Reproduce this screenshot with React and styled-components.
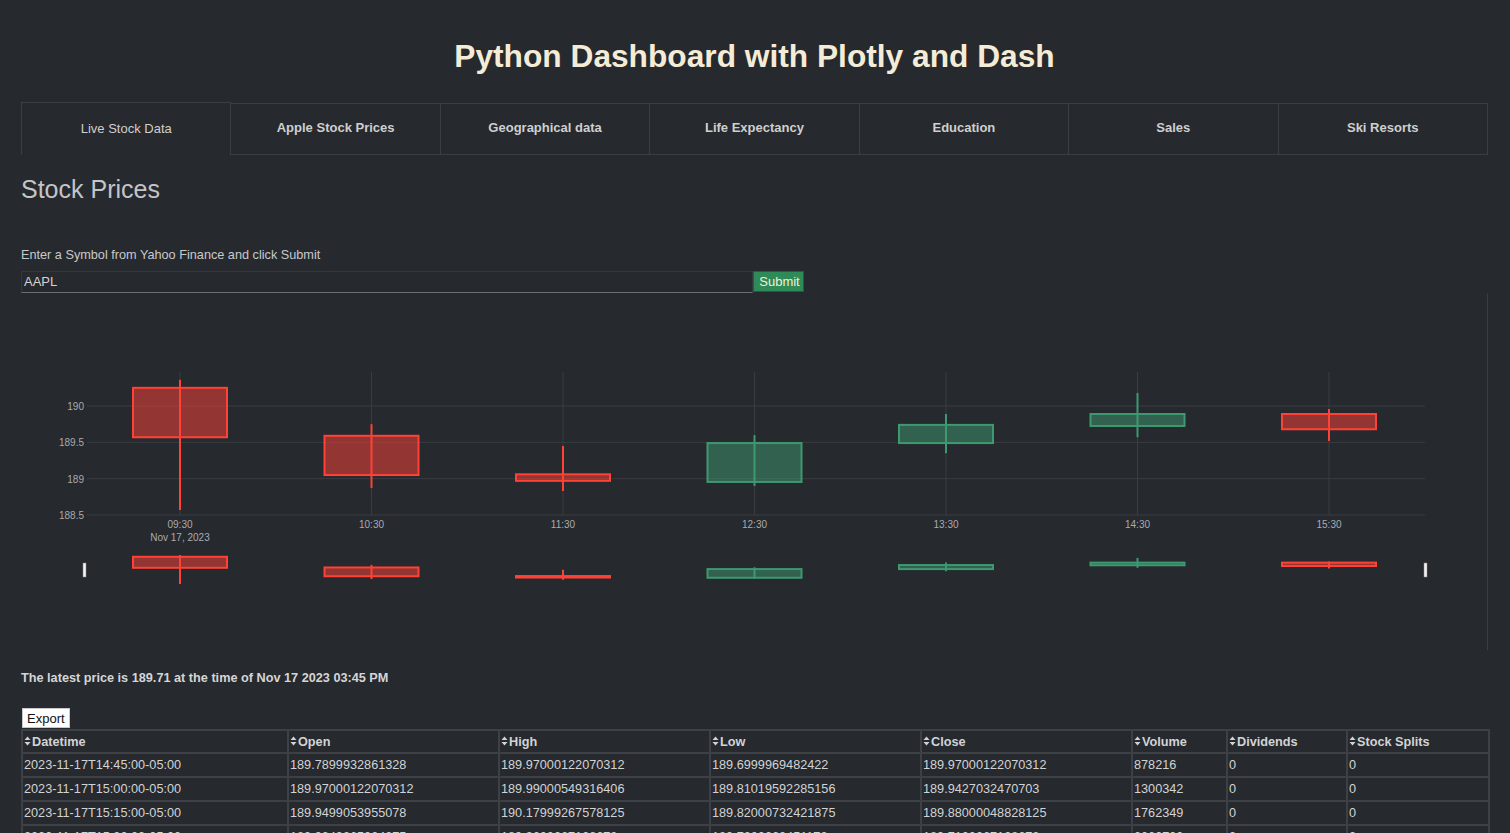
import React from "react";
import styled, { createGlobalStyle } from "styled-components";

const GlobalStyle = createGlobalStyle`
  body {
    margin: 0;
    background: #26292e;
    font-family: "Liberation Sans", Arial, sans-serif;
  }
`;

const tabs = [
  "Live Stock Data",
  "Apple Stock Prices",
  "Geographical data",
  "Life Expectancy",
  "Education",
  "Sales",
  "Ski Resorts",
];

// open, high, low, close
const candles = [
  { t: "09:30", o: 190.25, h: 190.36, l: 188.57, c: 189.57 },
  { t: "10:30", o: 189.59, h: 189.75, l: 188.87, c: 189.05 },
  { t: "11:30", o: 189.06, h: 189.45, l: 188.83, c: 188.97 },
  { t: "12:30", o: 188.955, h: 189.6, l: 188.9, c: 189.49 },
  { t: "13:30", o: 189.49, h: 189.89, l: 189.35, c: 189.74 },
  { t: "14:30", o: 189.725, h: 190.18, l: 189.57, c: 189.89 },
  { t: "15:30", o: 189.89, h: 189.96, l: 189.52, c: 189.68 },
];

const columns = [
  { name: "Datetime", width: 266 },
  { name: "Open", width: 211 },
  { name: "High", width: 211 },
  { name: "Low", width: 211 },
  { name: "Close", width: 211 },
  { name: "Volume", width: 95 },
  { name: "Dividends", width: 120 },
  { name: "Stock Splits", width: 142 },
];

const rows = [
  ["2023-11-17T14:45:00-05:00", "189.7899932861328", "189.97000122070312", "189.6999969482422", "189.97000122070312", "878216", "0", "0"],
  ["2023-11-17T15:00:00-05:00", "189.97000122070312", "189.99000549316406", "189.81019592285156", "189.9427032470703", "1300342", "0", "0"],
  ["2023-11-17T15:15:00-05:00", "189.9499053955078", "190.17999267578125", "189.82000732421875", "189.88000048828125", "1762349", "0", "0"],
  ["2023-11-17T15:30:00-05:00", "189.9349365234375", "189.9600067138672", "189.7300262451172", "189.7100067138672", "2060700", "0", "0"],
];

const RED = "#ff4136";
const GREEN = "#3d9970";

const x0 = 159;
const step = 191.5;
const yMain = (v) => 113 + (190 - v) * 72.67;
const yMini = (v) => 262 + (190.36 - v) * 16.2;

const Candle = ({ x, d, y }) => {
  const up = d.c >= d.o;
  const col = up ? GREEN : RED;
  const top = y(Math.max(d.o, d.c));
  const bot = y(Math.min(d.o, d.c));
  return (
    <g>
      <line x1={x} x2={x} y1={y(d.h)} y2={y(d.l)} stroke={col} strokeWidth="2" />
      <rect
        x={x - 47}
        y={top}
        width="94"
        height={Math.max(bot - top, 1)}
        fill={col}
        fillOpacity="0.5"
        stroke={col}
        strokeWidth="2"
      />
    </g>
  );
};

const Chart = () => (
  <svg width="1466" height="357" viewBox="0 0 1466 357">
    {[190, 189.5, 189, 188.5].map((v) => (
      <g key={v}>
        <line x1="66" x2="1404" y1={yMain(v)} y2={yMain(v)} stroke="#393c41" strokeWidth="1" />
        <text x="63" y={yMain(v) + 4} textAnchor="end" fontSize="10" fill="#a9abae">
          {v}
        </text>
      </g>
    ))}
    {candles.map((d, i) => (
      <line key={d.t} x1={x0 + i * step} x2={x0 + i * step} y1="79" y2="222" stroke="#393c41" strokeWidth="1" />
    ))}
    {candles.map((d, i) => (
      <Candle key={d.t} x={x0 + i * step} d={d} y={yMain} />
    ))}
    {candles.map((d, i) => (
      <text key={d.t} x={x0 + i * step} y="235" textAnchor="middle" fontSize="10" fill="#a9abae">
        {d.t}
      </text>
    ))}
    <text x={x0} y="248" textAnchor="middle" fontSize="10" fill="#a9abae">
      Nov 17, 2023
    </text>
    {candles.map((d, i) => (
      <Candle key={d.t} x={x0 + i * step} d={d} y={yMini} />
    ))}
    <rect x="62" y="270" width="3" height="14" fill="#f2f2f2" stroke="#888" strokeWidth="0.5" />
    <rect x="1403" y="270" width="3" height="14" fill="#f2f2f2" stroke="#888" strokeWidth="0.5" />
  </svg>
);

const SortIcon = () => (
  <svg width="7" height="10" viewBox="0 0 7 10">
    <path d="M3.5 0.5 L6.5 4 L0.5 4 Z M3.5 9.5 L6.5 6 L0.5 6 Z" fill="#d2d2d2" />
  </svg>
);

export default function App() {
  return (
    <>
      <GlobalStyle />
      <Page>
        <Title>Python Dashboard with Plotly and Dash</Title>
        <TabBar>
          {tabs.map((t, i) => (
            <Tab key={t} selected={i === 0}>
              {t}
            </Tab>
          ))}
        </TabBar>
        <Heading>Stock Prices</Heading>
        <Label>Enter a Symbol from Yahoo Finance and click Submit</Label>
        <InputRow>
          <SymbolInput defaultValue="AAPL" />
          <SubmitButton>Submit</SubmitButton>
        </InputRow>
        <Graph>
          <Chart />
        </Graph>
        <Latest>The latest price is 189.71 at the time of Nov 17 2023 03:45 PM</Latest>
        <ExportButton>Export</ExportButton>
        <Table>
          <colgroup>
            {columns.map((c) => (
              <col key={c.name} style={{ width: c.width }} />
            ))}
          </colgroup>
          <thead>
            <tr>
              {columns.map((c) => (
                <HeadCell key={c.name}>
                  <SortIcon />
                  {c.name}
                </HeadCell>
              ))}
            </tr>
          </thead>
          <tbody>
            {rows.map((r) => (
              <tr key={r[0]}>
                {r.map((v, j) => (
                  <Cell key={j}>{v}</Cell>
                ))}
              </tr>
            ))}
          </tbody>
        </Table>
      </Page>
    </>
  );
}

const Page = styled.div`
  padding: 38px 22px 0 21px;
  height: 795px;
  overflow: hidden;
`;

const Title = styled.h1`
  margin: 0;
  text-align: center;
  font-size: 31.7px;
  line-height: 36px;
  font-weight: bold;
  color: #f5ecd8;
`;

const TabBar = styled.div`
  display: flex;
  margin-top: 28px;
  height: 53px;
  align-items: flex-start;
`;

const Tab = styled.div`
  flex: 1;
  display: flex;
  align-items: center;
  justify-content: center;
  box-sizing: border-box;
  margin-left: -1px;
  font-size: 13px;
  color: #cfcfcf;
  font-weight: ${({ selected }) => (selected ? "normal" : "bold")};
  height: ${({ selected }) => (selected ? "53px" : "52px")};
  margin-top: ${({ selected }) => (selected ? "0" : "1px")};
  padding-bottom: ${({ selected }) => (selected ? "0" : "4px")};
  border: 1px solid #3b3e43;
  border-bottom-color: ${({ selected }) => (selected ? "transparent" : "#3b3e43")};
  &:first-child {
    margin-left: 0;
  }
`;

const Heading = styled.h2`
  margin: 20px 0 0;
  font-size: 25px;
  line-height: 28px;
  font-weight: normal;
  color: #c4c5c7;
`;

const Label = styled.div`
  margin-top: 44px;
  font-size: 12.7px;
  line-height: 16px;
  color: #c8c9cb;
`;

const InputRow = styled.div`
  display: flex;
  margin-top: 8px;
  height: 22px;
`;

const SymbolInput = styled.input`
  box-sizing: border-box;
  width: 732px;
  height: 22px;
  margin: 0;
  padding: 0 2px 2px;
  background: #26292e;
  border: 1px solid #34373c;
  border-bottom-color: #6a6d72;
  color: #d2d3d5;
  font-family: "Liberation Sans", Arial, sans-serif;
  font-size: 13px;
  outline: none;
`;

const SubmitButton = styled.button`
  box-sizing: border-box;
  width: 51px;
  height: 21px;
  margin: 0;
  padding: 0 0 1px 2px;
  background: #2e8a57;
  border: 1px solid #1f5f3c;
  color: #f4efd8;
  font-family: "Liberation Sans", Arial, sans-serif;
  font-size: 13px;
`;

const Graph = styled.div`
  height: 357px;
  width: 1467px;
  box-sizing: border-box;
  border-right: 1px solid #393c41;
`;

const Latest = styled.div`
  margin-top: 20px;
  font-size: 12.7px;
  line-height: 16px;
  font-weight: bold;
  color: #d4d5d7;
`;

const ExportButton = styled.button`
  display: block;
  margin: 22px 0 0 1px;
  height: 20px;
  padding: 0 4px;
  background: #ffffff;
  border: 1px solid #c8c8c8;
  color: #111;
  font-family: "Liberation Sans", Arial, sans-serif;
  font-size: 13px;
`;

const Table = styled.table`
  margin-top: 1px;
  width: 1467px;
  table-layout: fixed;
  border-collapse: collapse;
  font-size: 12.7px;
  color: #d2d3d5;
`;

const HeadCell = styled.th`
  height: 21px;
  padding: 0 1px;
  text-align: left;
  font-weight: bold;
  border: 2px solid #3d4045;
  white-space: nowrap;
  svg {
    margin-right: 1px;
  }
`;

const Cell = styled.td`
  height: 22px;
  padding: 0 1px;
  border: 2px solid #3d4045;
  white-space: nowrap;
  overflow: hidden;
`;
